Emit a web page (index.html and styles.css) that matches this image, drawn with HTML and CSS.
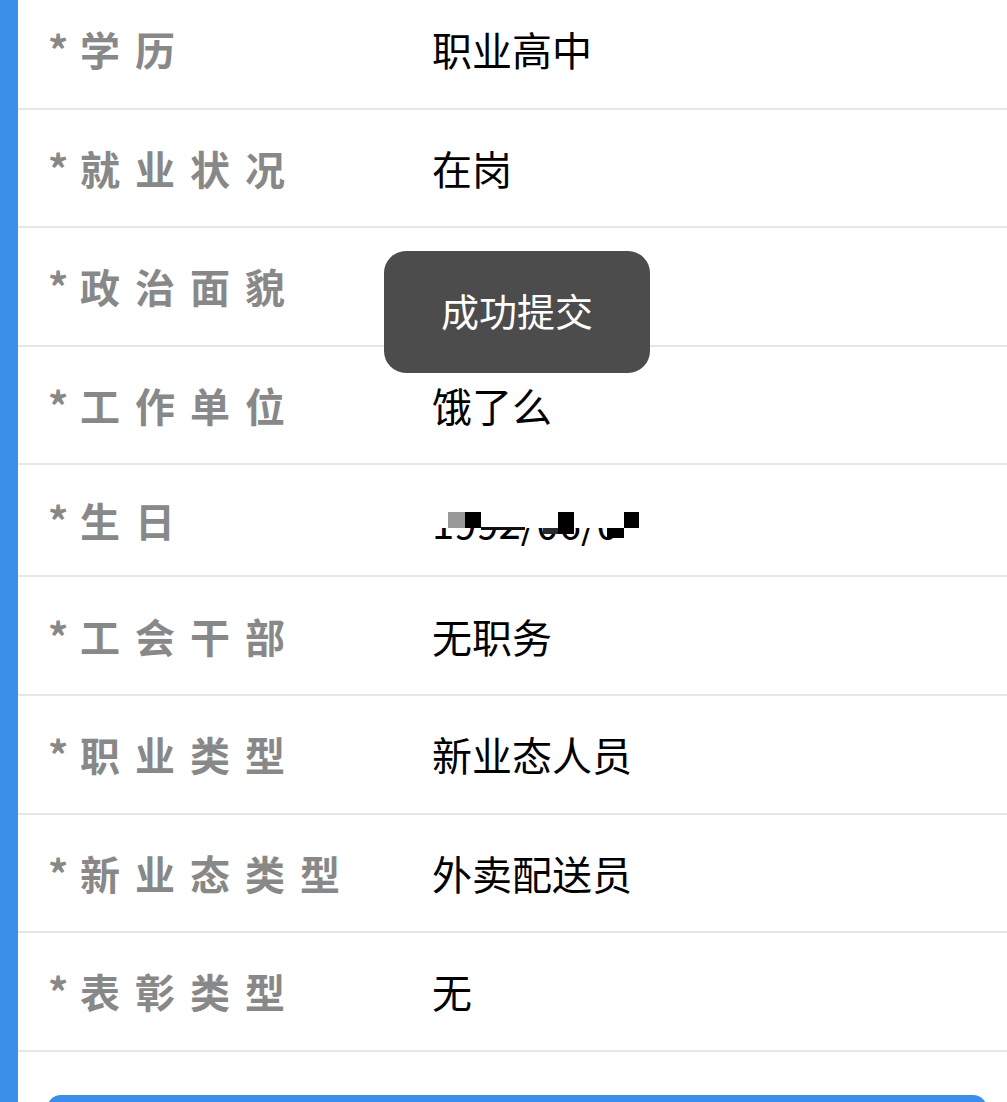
FILE: index.html
```html
<!DOCTYPE html>
<html lang="zh-CN">
<head>
<meta charset="utf-8">
<title>信息</title>
<link rel="stylesheet" href="styles.css">
</head>
<body>
<main class="page">
  <div class="list">
    <div class="row"><div class="label"><span class="star">*</span>学历</div><div class="value">职业高中</div></div>
    <div class="row"><div class="label"><span class="star">*</span>就业状况</div><div class="value">在岗</div></div>
    <div class="row"><div class="label"><span class="star">*</span>政治面貌</div><div class="value"></div></div>
    <div class="row"><div class="label"><span class="star">*</span>工作单位</div><div class="value">饿了么</div></div>
    <div class="row row-short">
      <div class="label"><span class="star">*</span>生日</div>
      <div class="value date">1992/06/0</div>
      <div class="mask">
        <span class="cover"></span>
        <span class="blk b1"></span>
        <span class="blk b2"></span>
        <span class="blk b3"></span>
        <span class="blk b4"></span>
        <span class="blk b5"></span>
        <span class="blk b6"></span>
        <span class="blk b7"></span>
      </div>
    </div>
    <div class="row"><div class="label"><span class="star">*</span>工会干部</div><div class="value">无职务</div></div>
    <div class="row"><div class="label"><span class="star">*</span>职业类型</div><div class="value">新业态人员</div></div>
    <div class="row"><div class="label"><span class="star">*</span>新业态类型</div><div class="value">外卖配送员</div></div>
    <div class="row"><div class="label"><span class="star">*</span>表彰类型</div><div class="value">无</div></div>
  </div>
  <div class="submit"></div>
  <div class="toast">成功提交</div>
</main>
</body>
</html>
```
FILE: styles.css
```css
html, body {
  margin: 0;
  padding: 0;
  background: #ffffff;
  overflow: hidden;
}
body {
  font-family: "Noto Sans CJK SC", "Noto Sans", sans-serif;
  height: 1102px;
}
.page {
  position: relative;
  display: flow-root;
  min-height: 1102px;
  border-left: 18px solid #3c8fe8;
  box-sizing: border-box;
}
.list {
  margin-top: -9px;
}
.row {
  position: relative;
  display: flex;
  align-items: center;
  height: 118.6px;
  box-sizing: border-box;
  border-bottom: 2px solid #e6e6e6;
}
.row-short {
  height: 112px;
}
.label {
  width: 414px;
  padding-left: 30px;
  box-sizing: border-box;
  font-size: 40px;
  line-height: 1;
  font-weight: 700;
  color: #888888;
  letter-spacing: 15px;
  white-space: nowrap;
}
.star {
  display: inline-block;
  width: 32px;
  letter-spacing: 0;
}
.value {
  font-size: 40px;
  line-height: 1;
  color: #000000;
  white-space: nowrap;
}
.date {
  letter-spacing: 0;
  padding-top: 4px;
}
.mask {
  position: absolute;
  left: 0;
  top: 0;
  width: 100%;
  height: 100%;
  pointer-events: none;
}
.cover {
  position: absolute;
  left: 410px;
  top: 20px;
  width: 240px;
  height: 43px;
  background: #ffffff;
}
.blk {
  position: absolute;
  background: #000;
}
.b1 { left: 430px; top: 47px; width: 17px; height: 16px; background: #999999; }
.b2 { left: 447px; top: 47px; width: 16px; height: 16px; }
.b3 { left: 463px; top: 62px; width: 44px; height: 3px; background: #111111; }
.b4 { left: 525px; top: 63px; width: 15px; height: 6px; background: #2a2a2a; }
.b5 { left: 540px; top: 47px; width: 16px; height: 22px; }
.b6 { left: 606px; top: 47px; width: 15px; height: 16px; }
.b7 { left: 589px; top: 63px; width: 17px; height: 10px; }
.submit {
  margin: 43px 20px 0 29px;
  height: 90px;
  background: #3c8fe8;
  border-radius: 14px;
}
.toast {
  position: absolute;
  left: 366px;
  top: 251px;
  width: 266px;
  height: 122px;
  box-sizing: border-box;
  padding-bottom: 6px;
  border-radius: 22px;
  background: #4c4c4c;
  color: #ffffff;
  font-size: 38px;
  display: flex;
  align-items: center;
  justify-content: center;
}
```
